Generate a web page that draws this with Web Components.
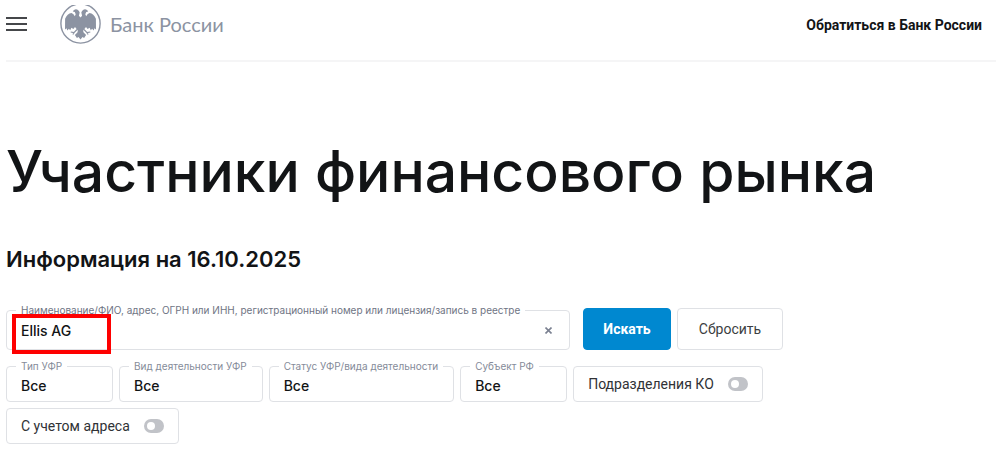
<!DOCTYPE html>
<html lang="ru">
<head>
<meta charset="utf-8">
<meta name="viewport" content="width=device-width, initial-scale=1">
<title>Участники финансового рынка</title>
<style>
    body {
        margin: 0;
        padding: 0 0 7px 6px;
        background-color: #fff;
        color: #121416;
        font-family: Inter, "Liberation Sans", sans-serif;
        font-size: 14px;
        --control-font: Roboto, "Liberation Sans", sans-serif;
    }
</style>
</head>
<body>

<site-header>
    <bank-logo slot="logo">Банк России</bank-logo>
    <a href="#contact">Обратиться в Банк России</a>
</site-header>

<page-title date="16.10.2025">Участники финансового рынка</page-title>

<search-form>
    <search-field slot="search" value="Ellis AG">Наименование/ФИО, адрес, ОГРН или ИНН, регистрационный номер или лицензия/запись в реестре</search-field>
    <action-button slot="search" kind="primary">Искать</action-button>
    <action-button slot="search">Сбросить</action-button>

    <filter-select>Тип УФР</filter-select>
    <filter-select>Вид деятельности УФР</filter-select>
    <filter-select>Статус УФР/вида деятельности</filter-select>
    <filter-select>Субъект РФ</filter-select>
    <filter-toggle>Подразделения КО</filter-toggle>
    <filter-toggle>С учетом адреса</filter-toggle>
</search-form>

<script>
// Rules that every boxed control shares
const fieldStyles = `
    * { box-sizing: border-box; }
    fieldset {
        margin: 0;
        padding: 0 10px 0 9px;
        border: 1px solid #dfe1e5;
        border-radius: 4px;
        min-width: 0;
    }
    legend {
        padding: 0 5px;
        color: #858b99;
        font-size: 10px;
        line-height: 12px;
        white-space: nowrap;
    }
    input, select {
        display: block;
        width: 100%;
        margin: 0;
        border: 0;
        padding: 0 5px;
        background: none;
        color: inherit;
        font: inherit;
        font-weight: 500;
        outline: none;
        appearance: none;
    }
`;

/* Site Header (<site-header>)
Menu button, logo slot, and links on the right.
*/
class SiteHeader extends HTMLElement {
    constructor() {
        super();
        this.attachShadow({mode: "open"});
        this.shadowRoot.innerHTML = `
        <style>
        :host { display: block; }
        header {
            display: flex;
            align-items: center;
            height: 62px;
            padding: 0 14px 12px 0;
            box-sizing: border-box;
            border-bottom: 2px solid #f5f5f6;
        }
        button {
            margin: 0 33px 0 0;
            padding: 0;
            border: 0;
            background: none;
            line-height: 0;
        }
        nav { margin-left: auto; }
        ::slotted(a) {
            color: inherit;
            font-family: var(--control-font);
            font-size: 14px;
            font-weight: 700;
            text-decoration: none;
        }
        </style>
        <header>
            <button type="button" aria-label="Меню">
                <svg width="21" height="14" viewBox="0 0 21 14" fill="#45474a"><path d="M0 0h21v2H0zM0 6h21v2H0zM0 12h21v2H0z"/></svg>
            </button>
            <slot name="logo"></slot>
            <nav><slot></slot></nav>
        </header>
        `;
    }
}

/* Bank Logo (<bank-logo>)
Two-headed eagle in a ring, with the name next to it.
*/
class BankLogo extends HTMLElement {
    constructor() {
        super();
        this.attachShadow({mode: "open"});
        this.shadowRoot.innerHTML = `
        <style>
        :host { display: block; }
        a {
            display: flex;
            align-items: center;
            gap: 9px;
            color: #8c93a2;
            font-family: Lato, "Open Sans", sans-serif;
            font-size: 20px;
            line-height: 24px;
            text-decoration: none;
            white-space: nowrap;
        }
        </style>
        <a href="#home">
            <svg width="41" height="39" viewBox="0 2 41 39" aria-hidden="true">
                <circle cx="20.5" cy="20.5" r="19.6" fill="none" stroke="#8c93a2" stroke-width="1.4"/>
                <g fill="#8c93a2">
                    <path d="M20.5 14.5 18.9 12.8 19.7 9.6Q18.7 6.4 15.8 6.2 13.5 6.4 12.8 8.5L14.8 9 15.7 11.3 14.8 13.2Q13.8 10.8 11.5 10.1 7.2 10.8 5.1 15.8L5 26.5 6.6 25.3 7.3 27.6 8.9 25.8 10.2 27.3 11.4 24.8 13.4 26.1 15 23.9 16.8 26.2 18.5 28.4 20.5 29 22.5 28.4 24.2 26.2 26 23.9 27.6 26.1 29.6 24.8 30.8 27.3 32.1 25.8 33.7 27.6 34.4 25.3 36 26.5 35.9 15.8Q33.8 10.8 29.5 10.1 27.2 10.8 26.2 13.2L25.3 11.3 26.2 9 28.2 8.5Q27.5 6.4 25.2 6.2 22.3 6.4 21.3 9.6L22.1 12.8Z"/>
                    <path d="M18.2 26.5h4.6l.8 3 2.5 2.5-2 3-1.6-.9-2 2.4-2-2.4-1.6.9-2-3 2.5-2.5z"/>
                </g>
                <path d="M17 26.5 14 29.7 10.7 29M14 29.7l-1.1 1.8M24 26.5l3 3.2 3.3-.7M27 29.7l1.1 1.8" fill="none" stroke="#8c93a2" stroke-width="1.2"/>
            </svg>
            <slot></slot>
        </a>
        `;
    }
}

/* Page Title (<page-title>)
Slotted heading, and the date the register is valid for.
*/
class PageTitle extends HTMLElement {
    constructor() {
        super();
        this.attachShadow({mode: "open"});
        this.shadowRoot.innerHTML = `
        <style>
        :host { display: block; padding-top: 76px; }
        h1 {
            margin: 0;
            font-size: 57px;
            font-weight: 500;
            line-height: 68px;
        }
        h2 {
            margin: 40px 0 32px;
            font-size: 22px;
            font-weight: 600;
            line-height: 26px;
        }
        </style>
        <h1><slot></slot></h1>
        <h2>Информация на ${this.getAttribute("date")}</h2>
        `;
    }
}

/* Search Form (<search-form>)
Slot "search" is the top line, everything else wraps below it.
*/
class SearchForm extends HTMLElement {
    constructor() {
        super();
        this.attachShadow({mode: "open"});
        this.shadowRoot.innerHTML = `
        <style>
        :host { display: block; max-width: 777px; }
        form { margin: 0; }
        .search, .filters {
            display: flex;
            align-items: flex-end;
            gap: 6px;
        }
        .search { margin-bottom: 10px; }
        .filters { flex-wrap: wrap; }
        </style>
        <form>
            <div class="search"><slot name="search"></slot></div>
            <div class="filters"><slot></slot></div>
        </form>
        `;
    }
}

class SearchField extends HTMLElement {
    constructor() {
        super();
        this.attachShadow({mode: "open"});
        this.shadowRoot.innerHTML = `
        <style>
        ${fieldStyles}
        :host { display: block; position: relative; flex: 1; min-width: 0; margin-right: 7px; }
        fieldset { height: 46px; }
        legend { color: #6f7584; }
        .line { display: flex; align-items: center; height: 28px; }
        input { flex: 1; min-width: 0; }
        button {
            margin: 0;
            padding: 0 7px;
            border: 0;
            background: none;
            line-height: 0;
        }
        .frame {
            position: absolute;
            left: 6px;
            top: 10px;
            width: 99px;
            height: 40px;
            border: 4px solid #fe0000;
            pointer-events: none;
        }
        </style>
        <fieldset>
            <legend><label for="query"><slot></slot></label></legend>
            <div class="line">
                <input id="query" type="text" value="${this.getAttribute("value")}">
                <button type="button" aria-label="Очистить">
                    <svg width="7" height="7" viewBox="0 0 7 7" stroke="#7b8191" stroke-width="1.6"><path d="M.5.5l6 6M6.5.5l-6 6"/></svg>
                </button>
            </div>
        </fieldset>
        <div class="frame"></div>
        `;
        this.shadowRoot.querySelector("button").addEventListener("click", () => {
            this.shadowRoot.querySelector("input").value = "";
        });
    }
}

/* Action Button (<action-button>)
kind="primary" gives the blue one.
*/
class ActionButton extends HTMLElement {
    constructor() {
        super();
        this.attachShadow({mode: "open"});
        this.shadowRoot.innerHTML = `
        <style>
        :host { display: block; font-family: var(--control-font); }
        button {
            display: block;
            min-width: 106px;
            height: 42px;
            margin: 0;
            padding: 0 16px;
            border: 1px solid #dfe1e5;
            border-radius: 4px;
            background-color: #fff;
            color: #3c3e42;
            font: inherit;
        }
        :host([kind="primary"]) button {
            min-width: 88px;
            border-color: #0088d0;
            background-color: #0088d0;
            color: #fff;
            font-weight: 700;
        }
        </style>
        <button type="button"><slot></slot></button>
        `;
    }
}

/* Filter Select (<filter-select>)
Drop-down as wide as its label.
*/
class FilterSelect extends HTMLElement {
    constructor() {
        super();
        this.attachShadow({mode: "open"});
        this.shadowRoot.innerHTML = `
        <style>
        ${fieldStyles}
        :host { display: block; }
        fieldset { min-width: 107px; height: 42px; }
        select { height: 26px; }
        </style>
        <fieldset>
            <legend><label for="choice"><slot></slot></label></legend>
            <select id="choice"><option>Все</option></select>
        </fieldset>
        `;
    }
}

/* Filter Toggle (<filter-toggle>)
Label and a switch on one line.
*/
class FilterToggle extends HTMLElement {
    constructor() {
        super();
        this.attachShadow({mode: "open"});
        this.shadowRoot.innerHTML = `
        <style>
        :host { display: block; font-family: var(--control-font); }
        label {
            display: flex;
            align-items: center;
            gap: 14px;
            height: 36px;
            padding: 0 14px;
            box-sizing: border-box;
            border: 1px solid #dfe1e5;
            border-radius: 4px;
            color: #303236;
            white-space: nowrap;
        }
        input {
            display: flex;
            align-items: center;
            width: 20px;
            height: 14px;
            margin: 0;
            padding: 0 3px;
            box-sizing: border-box;
            border-radius: 7px;
            background-color: #c1c3c8;
            appearance: none;
        }
        input::before {
            content: "";
            width: 8px;
            height: 8px;
            border-radius: 4px;
            background-color: #fff;
        }
        input:checked { justify-content: flex-end; background-color: #0088d0; }
        </style>
        <label><slot></slot><input type="checkbox"></label>
        `;
    }
}

customElements.define("site-header", SiteHeader);
customElements.define("bank-logo", BankLogo);
customElements.define("page-title", PageTitle);
customElements.define("search-form", SearchForm);
customElements.define("search-field", SearchField);
customElements.define("action-button", ActionButton);
customElements.define("filter-select", FilterSelect);
customElements.define("filter-toggle", FilterToggle);
</script>
</body>
</html>
